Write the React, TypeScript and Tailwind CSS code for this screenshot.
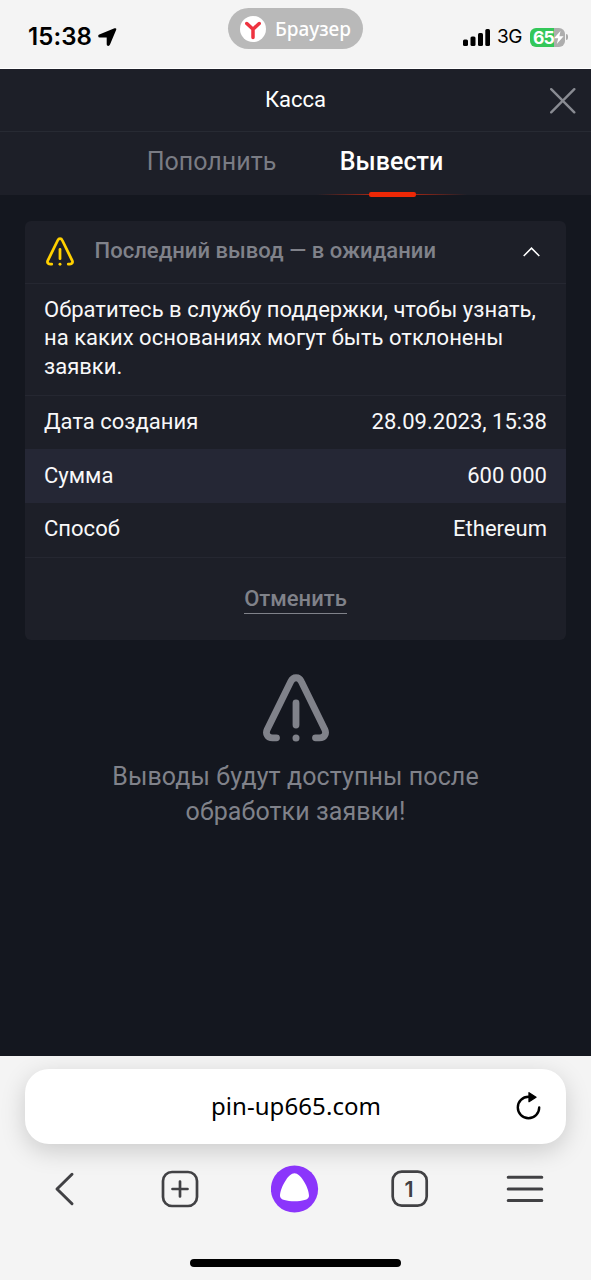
import React from "react";

function WarningIcon({ className, thickness }: { className: string; thickness: number }) {
  return (
    <svg className={className} viewBox="0 0 66 68" fill="none" stroke="currentColor" strokeWidth={thickness} strokeLinecap="round" strokeLinejoin="round">
      <path d="M13.500 63.800H9.500C4.500 63.800 2.200 59.500 4.200 55.500L27.800 7.500C30.200 2.500 36 2.500 38.300 7.500L61.800 55.500C63.800 59.500 61.500 63.800 56.500 63.800H52.500" />
      <path d="M33 29V51" />
      <circle cx="33" cy="64" r="3.500" fill="currentColor" stroke="none" />
    </svg>
  );
}

function StatusBar() {
  return (
    <header className="flex h-[69px] shrink-0 items-start border-b border-white bg-[#f4f4f4] text-black">
      <div className="flex w-[228px] items-center pt-[21px] pl-[28px]">
        <span className="w-[70px] font-['Inter',sans-serif] text-[24px] leading-[32px] font-semibold tracking-[0.1px]">15:38</span>
        <svg className="h-[18px] w-[19px]" viewBox="0 0 19 18">
          <path d="M16.500.3Q18.700-.3 18.200 1.700L12 16.600Q11.200 18.300 9.600 17.800Q8.700 17.400 8.700 16.200V9.500H1.800Q.2 9.400 .2 7.900Q.2 6.900 1.300 6.500Z" fill="#000" />
        </svg>
      </div>
      <div className="mt-[8px] flex h-[41px] w-[135px] items-center gap-[9px] rounded-full bg-[#b9b9b9] pl-[12px]">
        <svg className="h-[26px] w-[26px] shrink-0" viewBox="0 0 26 26">
          <circle cx="13" cy="13" r="13" fill="#fff" />
          <path d="M6.800 7.500L13 13.200L19.200 7.500M13 13V21.500" stroke="#ee3340" strokeWidth="3.500" strokeLinecap="round" fill="none" />
        </svg>
        <span className="font-['Noto_Sans',sans-serif] text-[19px] leading-[28px] font-medium text-white">Браузер</span>
      </div>
      <div className="flex flex-1 items-center pt-[21px] pl-[100px]">
        <svg className="h-[17px] w-[27px] shrink-0" viewBox="0 0 27 17">
          <rect x="0" y="10.500" width="5" height="6.500" rx="1.500" />
          <rect x="7.500" y="7.500" width="5" height="9.500" rx="1.500" />
          <rect x="15" y="4" width="5" height="13" rx="1.500" />
          <rect x="22.300" y="0" width="4.700" height="17" rx="1.500" />
        </svg>
        <span className="ml-[7px] w-[26px] font-['Inter',sans-serif] text-[19px] leading-[32px] tracking-[-0.4px]">3G</span>
        <div className="ml-[7px] flex h-[19px] w-[35px] items-center rounded-[6px] bg-linear-to-r from-[#34c759] from-68% to-[#adadad] to-68% pl-[3px] text-white">
          <span className="font-['Inter',sans-serif] text-[17.500px] leading-[19px] font-bold tracking-[-0.8px]">65</span>
          <svg className="h-[13px] w-[10px]" viewBox="0 0 10 13"><path d="M6.500 0L0 7.300H4.200L2.800 13L9.600 5.300H5.400Z" fill="#fff" /></svg>
        </div>
        <div className="ml-[1px] h-[6px] w-[2px] rounded-r-full bg-[#aaa]" />
      </div>
    </header>
  );
}

function DetailRow({ label, value, highlighted = false }: { label: string; value: string; highlighted?: boolean }) {
  return (
    <div className={highlighted ? "flex h-[53.700px] items-center justify-between bg-[#252735] px-[19px] pb-[2px]" : "flex h-[53.700px] items-center justify-between px-[19px] pb-[2px]"}>
      <span>{label}</span>
      <span>{value}</span>
    </div>
  );
}

function WithdrawalCard() {
  return (
    <section className="mx-[25px] mt-[26px] h-[419px] overflow-hidden rounded-[6px] bg-[#1d1f28] text-[22px] tracking-[0.020px] text-[#f8f8f9]">
      <div className="flex h-[62.500px] items-center border-b border-[#252731] pl-[21px]">
        <WarningIcon className="h-[29px] w-[28px] shrink-0 text-[#ffd000]" thickness={6.5} />
        <h2 className="ml-[20.500px] flex-1 pb-[2px] text-[22px] leading-[28px] font-medium tracking-[0.040px] whitespace-nowrap text-[#80828a]">Последний вывод — в ожидании</h2>
        <svg className="mr-[26px] h-[10px] w-[17px]" viewBox="0 0 17 10"><path d="M.7 9L8.500 1.100L16.300 9" fill="none" stroke="#fff" strokeWidth="1.500" /></svg>
      </div>
      <p className="h-[112px] border-b border-[#252731] pt-[12.400px] pl-[19px] leading-[28.500px] whitespace-nowrap">
        Обратитесь в службу поддержки, чтобы узнать,<br />на каких основаниях могут быть отклонены<br />заявки.
      </p>
      <DetailRow label="Дата создания" value="28.09.2023, 15:38" />
      <DetailRow label="Сумма" value="600 000" highlighted />
      <DetailRow label="Способ" value="Ethereum" />
      <div className="flex h-[84px] justify-center border-t border-[#252731] pt-[27px]">
        <button className="h-[29px] border-b-[1.500px] border-[#80828a] text-[22px] leading-[27px] font-medium text-[#80828a]">Отменить</button>
      </div>
    </section>
  );
}

function BrowserToolbar() {
  return (
    <footer className="flex h-[224px] shrink-0 flex-col overflow-hidden bg-[#f4f4f4] pt-[13px]">
      <div className="mx-[25px] flex h-[75px] shrink-0 items-center rounded-[24px] bg-white pl-[51px] text-black shadow-[0_7px_24px_rgba(0,0,0,0.17)]">
        <span className="flex-1 pb-[2px] text-center font-['Noto_Sans',sans-serif] text-[24px] tracking-[0.080px]">pin-up665.com</span>
        <svg className="mr-[25px] mb-px h-[28px] w-[25px]" viewBox="0 0 25 28">
          <path d="M12.500 4.800A10.700 10.700 0 1 0 23.200 15.500" fill="none" stroke="#000" strokeWidth="2.400" strokeLinecap="round" />
          <path d="M13 .7V9.700L20 5.200Z" fill="#000" stroke="#000" strokeWidth="1.300" strokeLinejoin="round" />
        </svg>
      </div>
      <nav className="flex h-[90px] shrink-0 items-center px-[6px] text-[#414144]">
        <div className="flex flex-1 justify-center pr-px">
          <svg className="h-[36px] w-[36px]" viewBox="0 0 36 36" fill="none" stroke="currentColor" strokeWidth="3" strokeLinecap="round" strokeLinejoin="round"><path d="M26 3.300L11 18L26 32.700" /></svg>
        </div>
        <div className="flex flex-1 justify-center">
          <svg className="h-[38px] w-[38px]" viewBox="0 0 38 38" fill="none" stroke="currentColor" strokeWidth="2.700" strokeLinecap="round"><rect x="2" y="2" width="34" height="34" rx="9" /><path d="M11.500 19H26.500M19 11.500V26.500" /></svg>
        </div>
        <div className="flex flex-1 justify-center">
          <svg className="mb-px h-[48px] w-[48px]" viewBox="0 0 48 48"><circle cx="23.500" cy="24" r="23.600" fill="#8b35fb" /><path d="M23.500 8.300C26.700 8.300 29.500 11.300 32 15C35.500 20 38 26.500 38 31C38 35 31 36.200 23.500 36.200S9 35 9 31C9 26.500 11.500 20 15 15C17.500 11.300 20.300 8.300 23.500 8.300Z" fill="#fff" /></svg>
        </div>
        <div className="flex flex-1 justify-center">
          <svg className="h-[38px] w-[38px]" viewBox="0 0 38 38" fill="none" stroke="currentColor" strokeWidth="2.700">
            <rect x="1.700" y="1.600" width="34" height="34" rx="9" />
            <text x="18" y="26.500" textAnchor="middle" fill="currentColor" stroke="none" className="font-['Inter',sans-serif] text-[21.500px] font-semibold">1</text>
          </svg>
        </div>
        <div className="flex flex-1 justify-center pr-[2px]">
          <svg className="h-[30px] w-[38px]" viewBox="0 0 38 30" fill="none" stroke="currentColor" strokeWidth="3" strokeLinecap="round"><path d="M2.200 3.300H35.800M2.200 15H35.800M2.200 26.600H35.800" /></svg>
        </div>
      </nav>
      <div className="mt-[25px] flex justify-center"><div className="h-[8px] w-[211px] rounded-full bg-black" /></div>
    </footer>
  );
}

export default function App() {
  return (
    <main className="flex h-[1280px] w-[591px] flex-col overflow-hidden bg-[#14171f] font-['Roboto',sans-serif]">
      <StatusBar />
      <div className="grid h-[63px] shrink-0 grid-cols-[1fr_auto_1fr] items-center border-b border-[#272a33] bg-[#1d1f28]">
        <span />
        <h1 className="text-[22px] leading-[28px] text-white">Касса</h1>
        <svg className="mt-[2px] mr-[15.500px] h-[26px] w-[26px] justify-self-end" viewBox="0 0 26 26"><path d="M1.200 1.200L24.300 24.300M24.300 1.200L1.200 24.300" stroke="#898b92" strokeWidth="2.400" strokeLinecap="round" /></svg>
      </div>
      <div className="flex h-[63px] shrink-0 bg-[#1d1f28] pl-[115px] text-[25px]">
        <div className="flex w-[193px] justify-center pt-[14px] leading-[32px] text-[#7a7c84]">Пополнить</div>
        <div className="relative flex w-[167px] justify-center pt-[14px] leading-[32px] font-medium tracking-[0.060px] text-white">
          Вывести
          <div className="absolute bottom-0 left-[9px] h-px w-[150px] bg-linear-to-r from-transparent via-[#d7290c] to-transparent" />
          <div className="absolute bottom-[-2px] left-[61px] h-[5px] w-[47px] rounded-[2px] bg-[#ed2806]" />
        </div>
      </div>
      <div className="flex-1">
        <WithdrawalCard />
        <div className="flex flex-col items-center pt-[34px] text-[#80828a]">
          <WarningIcon className="ml-px h-[68px] w-[66px]" thickness={6.8} />
          <p className="mt-[17px] text-center text-[25px] leading-[35px] tracking-[0.100px]">Выводы будут доступны после<br />обработки заявки!</p>
        </div>
      </div>
      <BrowserToolbar />
    </main>
  );
}
